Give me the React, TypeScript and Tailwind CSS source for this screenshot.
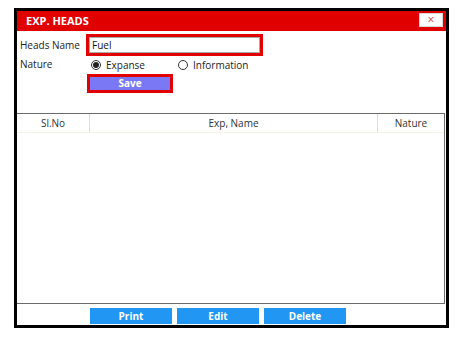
import React, { useState } from "react";

const font = { fontFamily: '"Open Sans", "Noto Sans", Arial, sans-serif' };

const Radio: React.FC<{ checked: boolean; label: string; onClick: () => void }> = ({ checked, label, onClick }) => (
  <button type="button" onClick={onClick} className="flex items-center gap-[5px] text-[10px] text-[#222]">
    <span className="w-[10px] h-[10px] rounded-full border border-[#333] flex items-center justify-center bg-white">
      {checked && <span className="w-[6px] h-[6px] rounded-full bg-[#222]" />}
    </span>
    {label}
  </button>
);

export default function App() {
  const [name, setName] = useState("Fuel");
  const [nature, setNature] = useState("Expanse");

  return (
    <div className="w-[461px] h-[338px] bg-white pt-[8px] pl-[14px]" style={font}>
      <div className="w-[435px] h-[320px] border-[3px] border-black flex flex-col bg-white">
        {/* title */}
        <div className="h-[20px] bg-[#e10000] flex items-start justify-between pl-[9px] pr-[3px]">
          <span className="text-white font-bold text-[11px] leading-[20px]">EXP. HEADS</span>
          <button className="mt-[2px] w-[24px] h-[14px] bg-white border border-[#d8d8d8] text-[#d84040] text-[12px] leading-[12px] flex items-center justify-center">
            ×
          </button>
        </div>

        {/* form */}
        <div className="h-[82px] pl-[3px] pt-[3px] flex flex-col">
          <div className="flex items-center h-[22px]">
            <span className="w-[66px] text-[10px] text-[#222]">Heads Name</span>
            <div className="w-[177px] h-[22px] border-[3px] border-[#e10000] flex">
              <input
                value={name}
                onChange={e => setName(e.target.value)}
                className="block w-full h-full border border-[#aaa] bg-white px-[2px] text-[10px] text-[#111] outline-none"
                style={font}
              />
            </div>
          </div>
          <div className="flex items-center h-[16px] mt-[1px]">
            <span className="w-[66px] text-[10px] text-[#222] -mt-[2px]">Nature</span>
            <div className="pl-[5px] flex items-center">
              <div className="w-[87px]">
                <Radio checked={nature === "Expanse"} label="Expanse" onClick={() => setNature("Expanse")} />
              </div>
              <Radio checked={nature === "Information"} label="Information" onClick={() => setNature("Information")} />
            </div>
          </div>
          <div className="ml-[67px] mt-[1px] w-[86px] h-[19px] border-[3px] border-[#e10000] flex">
            <button className="block w-full h-full bg-[#7b78f5] text-white font-bold text-[10px] leading-[13px]">Save</button>
          </div>
        </div>

        {/* table */}
        <div className="h-[191px] border-t border-r border-b border-[#6b6b6b] mr-[1px] flex flex-col">
          <div className="h-[19px] flex text-[10px] text-[#333] border-b border-[#f3f3e2]">
            <div className="w-[73px] border-r border-[#dcdcdc] flex items-center justify-center">Sl.No</div>
            <div className="flex-1 border-r border-[#dcdcdc] flex items-center justify-center">Exp, Name</div>
            <div className="w-[66px] flex items-center justify-center">Nature</div>
          </div>
          <div className="flex-1 bg-white" />
        </div>

        {/* buttons */}
        <div className="flex-1 flex items-start pt-[4px] pl-[73px] gap-[5px]">
          {["Print", "Edit", "Delete"].map(b => (
            <button key={b} className="w-[82px] h-[16px] bg-[#2196f3] text-white font-bold text-[10px] leading-[16px]">
              {b}
            </button>
          ))}
        </div>
      </div>
    </div>
  );
}
